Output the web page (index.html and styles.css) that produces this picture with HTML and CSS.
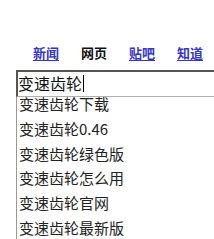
FILE: index.html
```html
<!DOCTYPE html>
<html>
<head>
<meta charset="utf-8">
<link rel="stylesheet" href="styles.css">
</head>
<body>
<div class="page">
  <nav class="tabs">
    <a class="tab link" href="#">新闻</a>
    <span class="tab current">网页</span>
    <a class="tab link" href="#">贴吧</a>
    <a class="tab link" href="#">知道</a>
  </nav>
  <div class="search"><span class="query">变速齿轮</span><span class="caret"></span></div>
  <ul class="suggest">
    <li>变速齿轮下载</li>
    <li>变速齿轮0.46</li>
    <li>变速齿轮绿色版</li>
    <li>变速齿轮怎么用</li>
    <li>变速齿轮官网</li>
    <li>变速齿轮最新版</li>
  </ul>
</div>
</body>
</html>
```
FILE: styles.css
```css
html, body {
  margin: 0;
  padding: 0;
  background: #fff;
}
.page {
  width: 214px;
  height: 239px;
  overflow: hidden;
  font-family: "Noto Sans CJK SC", "Noto Sans", sans-serif;
}
.tabs {
  display: flex;
  gap: 22px;
  padding: 45px 0 0 33px;
  height: 16px;
  font-size: 13px;
  line-height: 16px;
  font-weight: bold;
}
.tab {
  white-space: nowrap;
}
.link {
  color: #3636c4;
  text-decoration: underline;
  text-underline-offset: 2px;
}
.current {
  color: #111;
}
.search {
  margin: 9px 0 0 16px;
  width: 196px;
  height: 24px;
  border-top: 2px solid #555;
  border-left: 2px solid #555;
  border-bottom: 1px solid #b0b0b0;
  display: flex;
  align-items: center;
  font-size: 16px;
  line-height: 20px;
  color: #111;
}
.query {
  margin-top: -3px;
}
.caret {
  display: inline-block;
  width: 1px;
  height: 17px;
  background: #000;
  margin-left: 1px;
  margin-top: -2px;
}
.suggest {
  list-style: none;
  margin: 0 0 0 16px;
  padding: 0 0 0 1px;
  border-left: 1px solid #9a9a9a;
  height: 143px;
}
.suggest li {
  height: 24.8px;
  line-height: 14px;
  font-size: 15px;
  color: #222;
  padding-left: 1px;
}
```
